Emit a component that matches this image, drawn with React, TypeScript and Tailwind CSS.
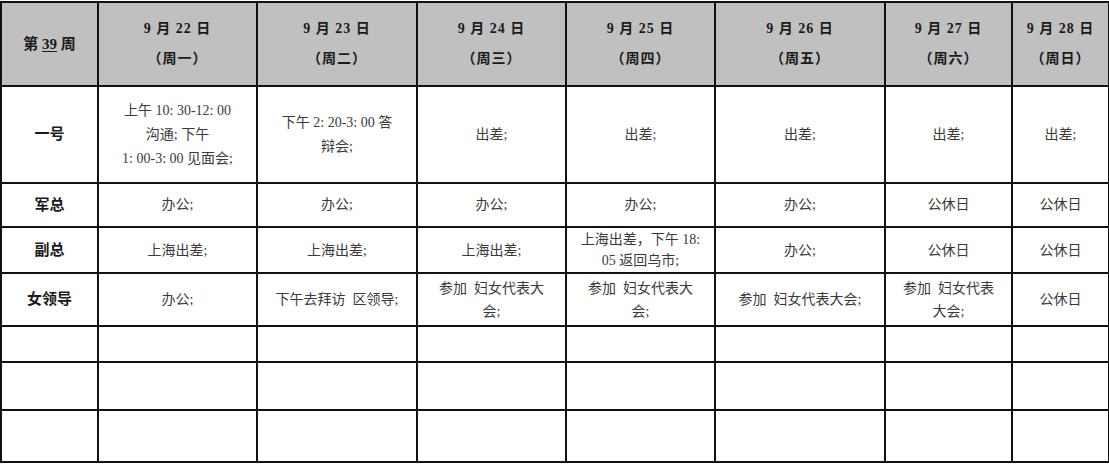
const days = [
  { date: '9 月 22 日', week: '（周一）' },
  { date: '9 月 23 日', week: '（周二）' },
  { date: '9 月 24 日', week: '（周三）' },
  { date: '9 月 25 日', week: '（周四）' },
  { date: '9 月 26 日', week: '（周五）' },
  { date: '9 月 27 日', week: '（周六）' },
  { date: '9 月 28 日', week: '（周日）' },
];

// each cell is a list of lines
const rows: { name: string; height: string; leading: string; cells: string[][] }[] = [
  {
    name: '一号',
    height: 'h-[97px]',
    leading: 'leading-[24px]',
    cells: [
      ['上午 10: 30-12: 00', '沟通; 下午', '1: 00-3: 00 见面会;'],
      ['下午 2: 20-3: 00 答', '辩会;'],
      ['出差;'],
      ['出差;'],
      ['出差;'],
      ['出差;'],
      ['出差;'],
    ],
  },
  {
    name: '军总',
    height: 'h-[44px]',
    leading: 'leading-[22px]',
    cells: [['办公;'], ['办公;'], ['办公;'], ['办公;'], ['办公;'], ['公休日'], ['公休日']],
  },
  {
    name: '副总',
    height: 'h-[46px]',
    leading: 'leading-[21px]',
    cells: [
      ['上海出差;'],
      ['上海出差;'],
      ['上海出差;'],
      ['上海出差，下午 18:', '05 返回乌市;'],
      ['办公;'],
      ['公休日'],
      ['公休日'],
    ],
  },
  {
    name: '女领导',
    height: 'h-[53px]',
    leading: 'leading-[23px]',
    cells: [
      ['办公;'],
      ['下午去拜访  区领导;'],
      ['参加  妇女代表大', '会;'],
      ['参加  妇女代表大', '会;'],
      ['参加  妇女代表大会;'],
      ['参加  妇女代表', '大会;'],
      ['公休日'],
    ],
  },
];

const emptyHeights = ['h-[36px]', 'h-[48px]', 'h-[52px]'];

const cell = 'border-2 border-[#111] text-center align-middle p-0';

export default function App() {
  return (
    <div
      className="w-[1109px] h-[464px] bg-white overflow-hidden pt-px"
      style={{ fontFamily: '"Liberation Serif", "Noto Sans CJK SC", serif' }}
    >
      <table className="w-[1108px] table-fixed border-collapse">
        <colgroup>
          <col className="w-[97px]" />
          <col className="w-[159px]" />
          <col className="w-[160px]" />
          <col className="w-[149px]" />
          <col className="w-[149px]" />
          <col className="w-[170px]" />
          <col className="w-[127px]" />
          <col className="w-[97px]" />
        </colgroup>
        <thead>
          <tr className="h-[84px] bg-[#c0c0c0]">
            <th className={`${cell} text-[15px] font-bold text-[#1a1a1a]`}>
              第 <span className="underline underline-offset-2">39</span> 周
            </th>
            {days.map((d) => (
              <th
                key={d.date}
                className={`${cell} text-[14px] font-bold text-[#1a1a1a] leading-[30px] tracking-[1px]`}
              >
                <div>{d.date}</div>
                <div>{d.week}</div>
              </th>
            ))}
          </tr>
        </thead>
        <tbody>
          {rows.map((r) => (
            <tr key={r.name} className={r.height}>
              <td className={`${cell} text-[15px] font-bold text-[#1a1a1a]`}>{r.name}</td>
              {r.cells.map((lines, i) => (
                <td key={i} className={`${cell} text-[14px] text-[#3a3a3a] ${r.leading} whitespace-pre`}>
                  {lines.map((l, j) => (
                    <div key={j}>{l}</div>
                  ))}
                </td>
              ))}
            </tr>
          ))}
          {emptyHeights.map((h, k) => (
            <tr key={k} className={h}>
              {Array.from({ length: 8 }).map((_, i) => (
                <td key={i} className={cell}></td>
              ))}
            </tr>
          ))}
        </tbody>
      </table>
    </div>
  );
}
